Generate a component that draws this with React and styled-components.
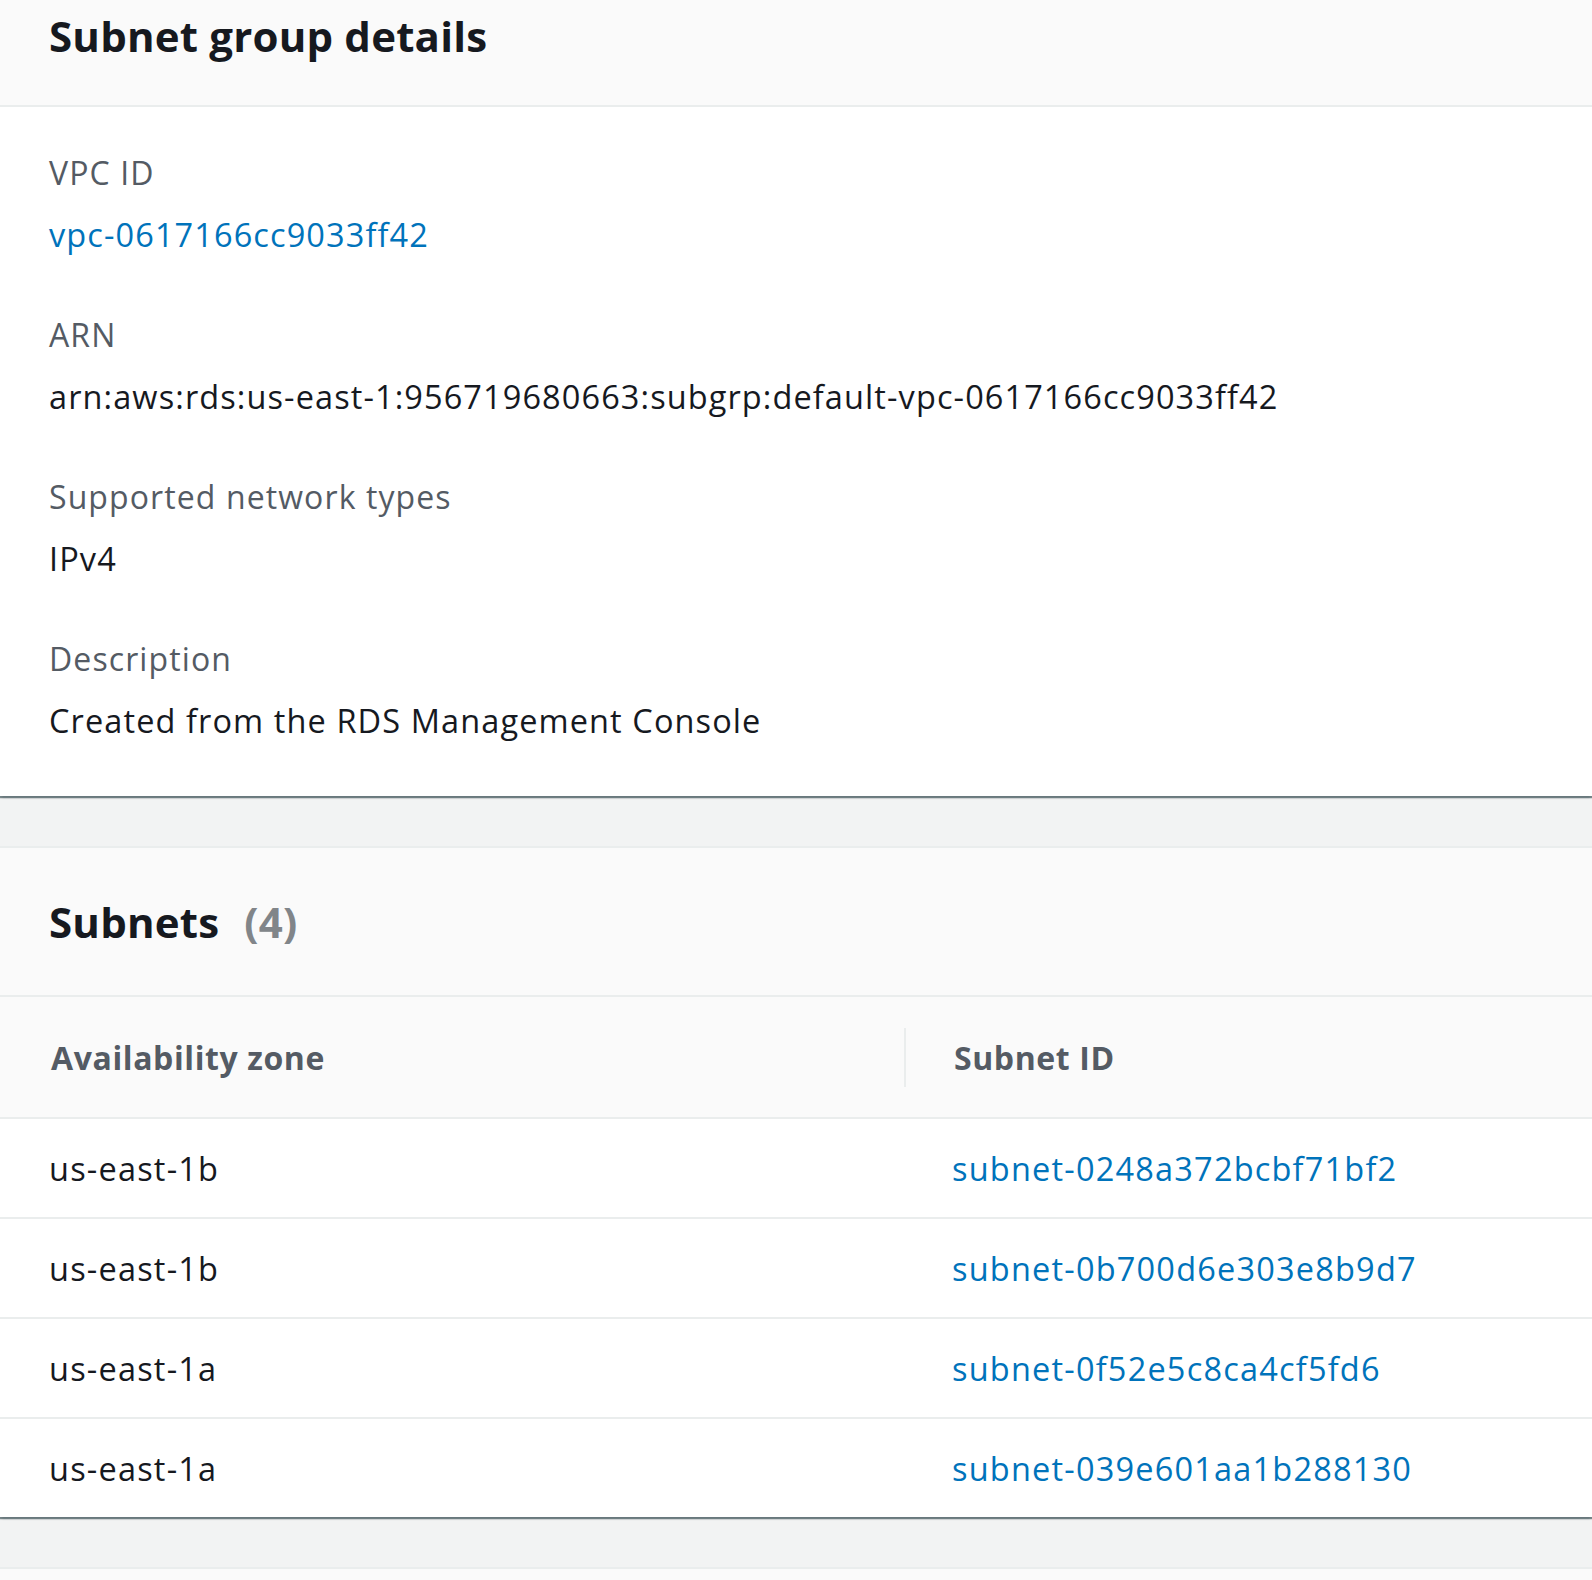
import React from 'react';
import styled, { createGlobalStyle } from 'styled-components';

const GlobalStyle = createGlobalStyle`
    html, body {
        margin: 0;
        padding: 0;
        background: #f2f3f3;
    }
    body {
        font-family: "Open Sans", "Noto Sans", Arial, sans-serif;
        color: #16191f;
    }
`;

const details = [
    { label: 'VPC ID', value: 'vpc-0617166cc9033ff42', link: true },
    { label: 'ARN', value: 'arn:aws:rds:us-east-1:956719680663:subgrp:default-vpc-0617166cc9033ff42' },
    { label: 'Supported network types', value: 'IPv4' },
    { label: 'Description', value: 'Created from the RDS Management Console' },
];

const subnets = [
    { zone: 'us-east-1b', id: 'subnet-0248a372bcbf71bf2' },
    { zone: 'us-east-1b', id: 'subnet-0b700d6e303e8b9d7' },
    { zone: 'us-east-1a', id: 'subnet-0f52e5c8ca4cf5fd6' },
    { zone: 'us-east-1a', id: 'subnet-039e601aa1b288130' },
];

const App = () => {
    return (
        <>
            <GlobalStyle />
            <Page>
                <Panel>
                    <DetailsHeader>
                        <Title>Subnet group details</Title>
                    </DetailsHeader>
                    <DetailsBody>
                        {details.map((item) => (
                            <Field key={item.label}>
                                <Label>{item.label}</Label>
                                <Value $link={item.link}>{item.value}</Value>
                            </Field>
                        ))}
                    </DetailsBody>
                </Panel>

                <Panel $top>
                    <TableTitleBar>
                        <Title>
                            Subnets <Counter>(4)</Counter>
                        </Title>
                    </TableTitleBar>
                    <Table>
                        <thead>
                            <tr>
                                <HeadCell>Availability zone</HeadCell>
                                <HeadCell $divider>Subnet ID</HeadCell>
                            </tr>
                        </thead>
                        <tbody>
                            {subnets.map((s) => (
                                <Row key={s.id}>
                                    <Cell>{s.zone}</Cell>
                                    <Cell $second>
                                        <Link href="#">{s.id}</Link>
                                    </Cell>
                                </Row>
                            ))}
                        </tbody>
                    </Table>
                </Panel>

                <Panel $top $stub />
            </Page>
        </>
    );
};

const Page = styled.div`
    display: flex;
    flex-direction: column;
    gap: 50px;
    width: 1592px;
    height: 1580px;
    overflow: hidden;
`;

const Panel = styled.section`
    flex-shrink: 0;
    background: #ffffff;
    border-top: ${(p) => (p.$top ? '2px solid #eaeded' : 'none')};
    box-shadow: 0 2px 1px 0 rgba(0, 28, 36, 0.45), 2px 2px 2px 0 rgba(0, 28, 36, 0.12), -2px 2px 2px 0 rgba(0, 28, 36, 0.12);
    ${(p) => p.$stub && 'background: #fafafa; height: 60px;'}
`;

const DetailsHeader = styled.header`
    height: 107px;
    box-sizing: border-box;
    padding: 11px 49px 0;
    background: #fafafa;
    border-bottom: 2px solid #eaeded;
`;

const Title = styled.h2`
    margin: 0;
    font-size: 42px;
    line-height: 50px;
    font-weight: 700;
    color: #16191f;
    letter-spacing: 0.2px;
`;

const Counter = styled.span`
    margin-left: 14px;
    color: #818589;
    font-weight: 700;
`;

const DetailsBody = styled.div`
    display: flex;
    flex-direction: column;
    gap: 54px;
    padding: 43px 49px 52px;
`;

const Field = styled.div`
    display: flex;
    flex-direction: column;
    gap: 16px;
`;

const Label = styled.div`
    font-size: 32px;
    line-height: 46px;
    color: #545b64;
    letter-spacing: 1.1px;
`;

const Value = styled.div`
    font-size: 32.5px;
    line-height: 46px;
    letter-spacing: 1.1px;
    color: ${(p) => (p.$link ? '#0073bb' : '#16191f')};
`;

const TableTitleBar = styled.div`
    height: 149px;
    box-sizing: border-box;
    display: flex;
    align-items: center;
    padding: 0 49px;
    background: #fafafa;
    border-bottom: 2px solid #eaeded;
`;

const Table = styled.table`
    width: 100%;
    border-collapse: collapse;
    table-layout: fixed;
`;

const HeadCell = styled.th`
    position: relative;
    height: 120px;
    padding: 0 0 0 ${(p) => (p.$divider ? '50px' : '51px')};
    width: ${(p) => (p.$divider ? 'auto' : '853px')};
    text-align: left;
    background: #fafafa;
    border-bottom: 2px solid #eaeded;
    font-size: 32px;
    font-weight: 700;
    color: #545b64;
    letter-spacing: 0.6px;

    &::before {
        content: '';
        display: ${(p) => (p.$divider ? 'block' : 'none')};
        position: absolute;
        left: 0;
        top: 31px;
        width: 2px;
        height: 59px;
        background: #eaeded;
    }
`;

const Row = styled.tr`
    & + & td {
        border-top: 2px solid #eaeded;
    }
`;

const Cell = styled.td`
    height: 98px;
    padding: 0 0 0 ${(p) => (p.$second ? '48px' : '49px')};
    font-size: 32.5px;
    letter-spacing: 1.2px;
    color: #16191f;
`;

const Link = styled.a`
    color: #0073bb;
    text-decoration: none;
`;

export default App;
